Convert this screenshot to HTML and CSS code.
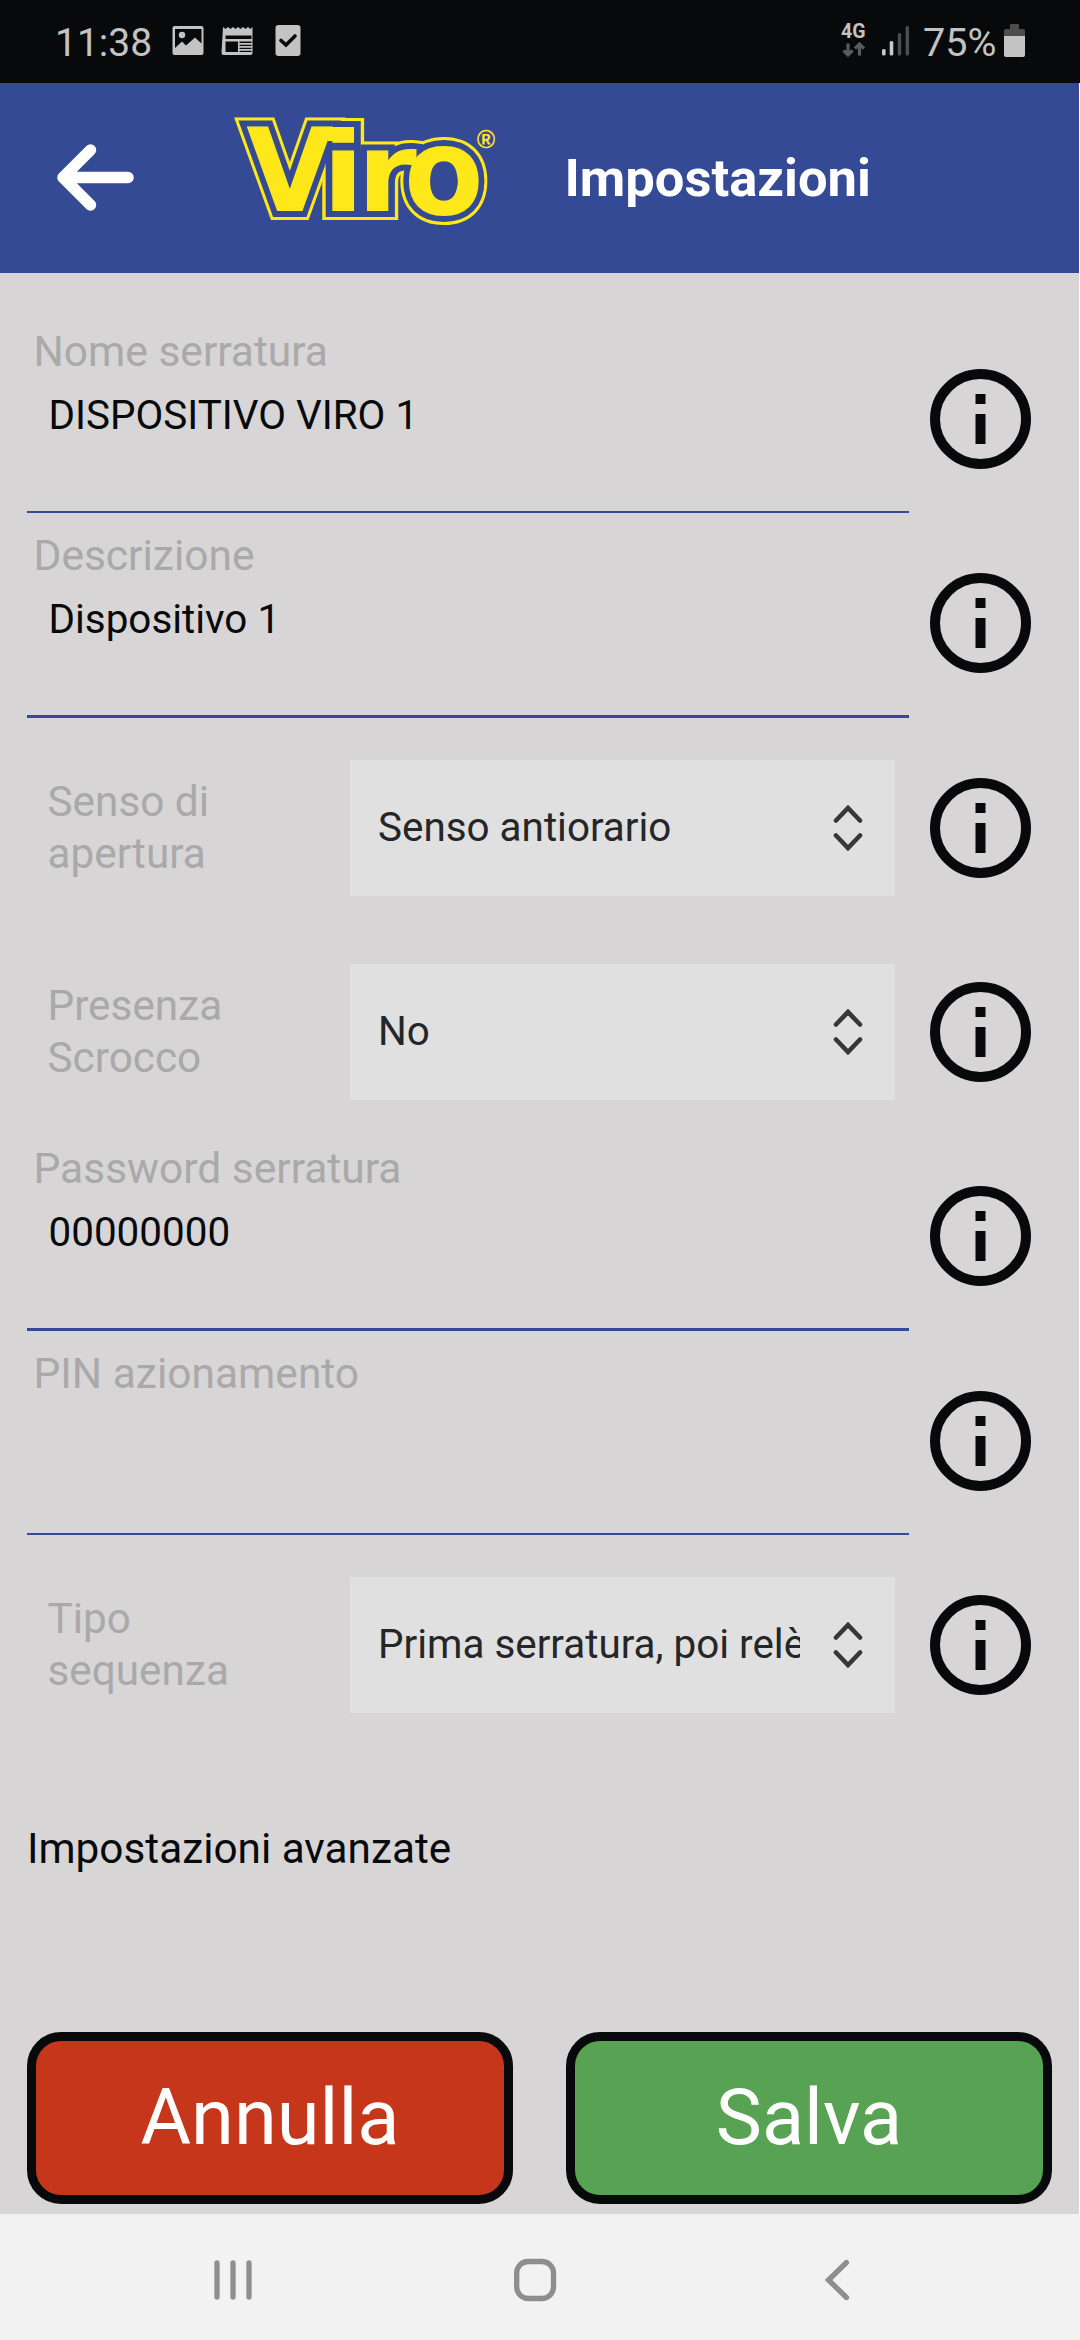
FILE: index.html
```html
<!DOCTYPE html>
<html lang="it">
<head>
<meta charset="utf-8">
<title>Impostazioni</title>
<link rel="stylesheet" href="styles.css">
</head>
<body>
<svg class="defs" width="0" height="0" aria-hidden="true">
  <symbol id="info" viewBox="0 0 101 100">
    <ellipse cx="50.5" cy="50" rx="45.5" ry="45" fill="none" stroke="currentColor" stroke-width="10"/>
    <path d="M45.5 25h10v10h-10zM45.5 45h10v30h-10z" fill="currentColor"/>
  </symbol>
  <symbol id="updown" viewBox="0 0 30 46">
    <path d="M3 15.5L15 3l12 12.500M3 30.500L15 43l12-12.500" fill="none" stroke="currentColor" stroke-width="4.600" stroke-linecap="round"/>
  </symbol>
</svg>

<div class="status">
  <span class="clock">11:38</span>
  <svg class="st-left" width="131" height="34" viewBox="171 24 131 34">
    <path fill="#c3c3c3" fill-rule="evenodd" d="M174.500 26h27a2 2 0 0 1 2 2v25a2 2 0 0 1-2 2h-27a2 2 0 0 1-2-2V28a2 2 0 0 1 2-2zM175 29v19l7-6.500 4 4 9-8 6.500 6V29z"/>
    <circle cx="182" cy="35" r="3.200" fill="#c3c3c3"/>
    <path fill="#c3c3c3" fill-rule="evenodd" d="M223 27l2.500 2 2.500-2 2.500 2 2.500-2 2.500 2 2.500-2 2.500 2 2.500-2 2.500 2 2.500-2 2.500 2 2-2v26a2 2 0 0 1-2 2h-27a2 2 0 0 1-2-2zM225.500 35.500V39h26v-3.500zM225.500 41.500V52H238V41.500zM239.500 41.500V43h12v-1.500zM239.500 44.700v1.300h12v-1.300zM239.500 47.700V49h12v-1.300zM239.500 50.700V52h12v-1.300z"/>
    <rect x="275.500" y="25" width="25" height="31" rx="3" fill="#c3c3c3"/>
    <path d="M281 40.500l5 4.500 9-9" fill="none" stroke="#08090b" stroke-width="3.600" stroke-linecap="round"/>
  </svg>
  <div class="net">
    <span class="net-type">4G</span>
    <svg width="23" height="15" viewBox="842 42 23 15" fill="none" stroke="#5b5b5b" stroke-width="3.200">
      <path d="M848 43.500v11M843.500 50.500l4.500 4.500 4.500-4.500M859.500 55.500v-11M855 48.500l4.500-4.500 4.500 4.500"/>
    </svg>
  </div>
  <svg class="signal" width="28" height="30" viewBox="882 26 28 30">
    <rect x="882" y="49" width="3.600" height="6.500" rx="1.500" fill="#c9c9c9"/>
    <rect x="889.700" y="41" width="3.600" height="14.500" rx="1.500" fill="#c9c9c9"/>
    <rect x="897.800" y="33" width="3.400" height="22.500" rx="1.500" fill="#4d4d4d"/>
    <rect x="905.600" y="26" width="3.400" height="29.500" rx="1.500" fill="#4d4d4d"/>
  </svg>
  <span class="percent">75%</span>
  <svg class="battery" width="21" height="33" viewBox="1004 24 21 33">
    <path d="M1010 29v-4a1 1 0 0 1 1-1h7a1 1 0 0 1 1 1v4h4a2 2 0 0 1 2 2v5h-21v-5a2 2 0 0 1 2-2z" fill="#4d4d4d"/>
    <path d="M1004 36h21v19a2 2 0 0 1-2 2h-17a2 2 0 0 1-2-2z" fill="#c3c3c3"/>
  </svg>
</div>

<header class="bar">
  <svg class="back" width="80" height="70" viewBox="56 143 80 70">
    <path d="M90.500 150L63 177.500l27.500 27.500M64 177.500h64" fill="none" stroke="#fff" stroke-width="11.500" stroke-linecap="round" stroke-linejoin="round"/>
  </svg>
  <svg class="logo" width="290" height="140" viewBox="220 100 290 140">
    <defs>
      <g id="viro" class="logo-text">
        <text transform="translate(246.200 211.300) scale(.977 1)" font-size="115.200">V</text>
        <text transform="translate(321.900 211.300) scale(1.120 1)" font-size="110.500">i</text>
        <text transform="translate(356.800 211.300) scale(1.100 1)" font-size="110.700">r</text>
        <text transform="translate(404 214.300) scale(.960 1)" font-size="120.700">o</text>
      </g>
    </defs>
    <use href="#viro" class="logo-line"/>
    <use href="#viro" class="logo-gap"/>
    <path d="M335 135h22v14h18v68h-40z" fill="#344a94"/>
    <use href="#viro" class="logo-fill"/>
    <path d="M325 127.300h29v13.700h-26z" fill="#ffe81a"/>
    <ellipse cx="444.200" cy="181.700" rx="13.500" ry="16.500" fill="#344a94"/>
    <text class="logo-mark" x="486" y="147.500" text-anchor="middle">®</text>
  </svg>
  <h1 class="title">Impostazioni</h1>
</header>

<main class="form">
  <div class="row">
    <div class="field"><label class="label">Nome serratura</label><span class="value">DISPOSITIVO VIRO 1</span></div>
    <svg class="info"><use href="#info"/></svg>
  </div>
  <div class="row">
    <div class="field strong"><label class="label">Descrizione</label><span class="value">Dispositivo 1</span></div>
    <svg class="info"><use href="#info"/></svg>
  </div>
  <div class="row">
    <label class="side-label">Senso di apertura</label>
    <div class="select"><span class="option">Senso antiorario</span><svg class="updown"><use href="#updown"/></svg></div>
    <svg class="info"><use href="#info"/></svg>
  </div>
  <div class="row">
    <label class="side-label">Presenza Scrocco</label>
    <div class="select"><span class="option">No</span><svg class="updown"><use href="#updown"/></svg></div>
    <svg class="info"><use href="#info"/></svg>
  </div>
  <div class="row">
    <div class="field strong"><label class="label">Password serratura</label><span class="value">00000000</span></div>
    <svg class="info"><use href="#info"/></svg>
  </div>
  <div class="row">
    <div class="field"><label class="label">PIN azionamento</label><span class="value"></span></div>
    <svg class="info"><use href="#info"/></svg>
  </div>
  <div class="row">
    <label class="side-label">Tipo sequenza</label>
    <div class="select"><span class="option">Prima serratura, poi relè</span><svg class="updown"><use href="#updown"/></svg></div>
    <svg class="info"><use href="#info"/></svg>
  </div>
  <div class="advanced">Impostazioni avanzate</div>
  <div class="actions">
    <button class="btn cancel">Annulla</button>
    <button class="btn save">Salva</button>
  </div>
</main>

<nav class="nav">
  <svg width="1080" height="126" viewBox="0 2214 1080 126" fill="none" stroke="#8e8e8e" stroke-width="5.300" stroke-linecap="round">
    <path d="M217 2263v34M233 2263v34M249 2263v34"/>
    <rect x="516.700" y="2261.500" width="36.800" height="37" rx="11.500"/>
    <path d="M846.500 2262.500L828.500 2280l18 17.500"/>
  </svg>
</nav>
</body>
</html>
```
FILE: styles.css
```css
* { box-sizing: border-box; }
body {
  margin: 0;
  width: 1080px;
  height: 2340px;
  display: flex;
  flex-direction: column;
  overflow: hidden;
  background: #fff;
  font-family: Roboto, sans-serif;
  color: #08090b;
}
svg { display: block; flex: none; }
.defs { position: absolute; }

.status {
  height: 83px;
  flex: none;
  display: flex;
  align-items: flex-start;
  padding-left: 55px;
  background: #08090b;
  color: #c3c3c3;
}
.clock, .percent { font-size: 39px; line-height: 46px; padding-top: 19.500px; white-space: nowrap; }
.clock { width: 116px; }
.st-left { margin-top: 24px; }
.net { margin: 22px 0 0 539px; width: 41px; display: flex; flex-direction: column; }
.net svg { margin-left: 1px; }
.net-type { font-size: 19.500px; font-weight: 700; line-height: 20px; }
.signal { margin-top: 26px; }
.percent { margin-left: 13px; width: 81px; font-size: 39.500px; }
.battery { margin-top: 24px; }

.bar {
  width: 1079px;
  height: 190px;
  flex: none;
  display: flex;
  align-items: flex-start;
  padding-left: 56px;
  background: #344a94;
}
.back { margin-top: 60px; }
.logo { margin: 17px 0 0 84px; }
.logo-text { font-family: "DejaVu Sans", sans-serif; font-weight: 700; }
.logo-line { fill: #ffe81a; stroke: #ffe81a; stroke-width: 18px; stroke-miterlimit: 6; }
.logo-gap { fill: #344a94; stroke: #344a94; stroke-width: 12px; stroke-miterlimit: 6; }
.logo-fill { fill: #ffe81a; }
.logo-mark { font-family: "Liberation Sans", sans-serif; font-size: 25px; font-weight: 700; fill: #ffe81a; }
.title { margin: 64px 0 0 54.500px; font-size: 52.500px; line-height: 62px; font-weight: 700; color: #fff; }

.form {
  width: 1079px;
  height: 1941px;
  flex: none;
  padding: 36px 48px 0 27px;
  background: #d7d5d6;
}
.row { height: 204.330px; display: flex; justify-content: space-between; }
.field {
  width: 882px;
  padding: 18px 0 0 6.500px;
  display: flex;
  flex-direction: column;
  border-bottom: 2px solid #344a94;
}
.strong { border-bottom-width: 3px; }
.label { font-size: 42.500px; line-height: 50px; color: #a9a9a9; }
.value { margin: 13.500px 0 0 15px; font-size: 40.400px; line-height: 50px; }
.info { width: 101px; height: 100px; margin-top: 60px; color: #08090b; }
.side-label {
  width: 323px;
  padding: 58px 120px 0 20.500px;
  font-size: 42.300px;
  line-height: 52.500px;
  color: #a9a9a9;
}
.select {
  width: 545px;
  height: 136px;
  margin: 42px 35px 0 0;
  padding: 0 32px 0 28px;
  display: flex;
  align-items: center;
  justify-content: space-between;
  background: #e0e0e0;
  color: #252627;
}
.option { width: 422px; overflow: hidden; white-space: nowrap; font-size: 40.400px; line-height: 50px; }
.updown { width: 30px; height: 46px; color: #363738; }
.advanced { margin-top: 84.500px; font-size: 42.300px; line-height: 50px; height: 50px; }
.actions { margin-top: 158.500px; display: flex; gap: 53px; }
.btn {
  width: 486px;
  height: 172px;
  flex: none;
  padding: 0;
  border: 9.500px solid #08090b;
  border-radius: 34px;
  font-family: inherit;
  font-size: 77.600px;
  line-height: 90px;
  color: #fff;
}
.cancel { background: #c6361b; }
.save { background: #57a353; }

.nav { height: 126px; flex: none; background: #f2f2f2; }
```
